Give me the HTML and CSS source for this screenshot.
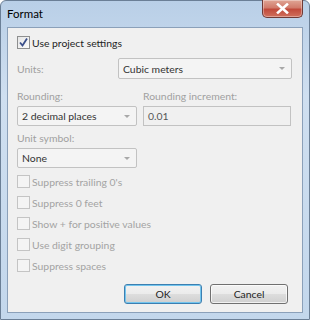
FILE: index.html
```html
<!DOCTYPE html>
<html lang="en">
<head>
    <meta charset="UTF-8">
    <title>Format</title>
    <link rel="stylesheet" href="styles.css">
</head>
<body>
    <div class="window">
        <div class="titlebar">
            <span class="title">Format</span>
            <div class="close">
                <svg width="13" height="11" viewBox="0 0 13 11">
                    <path d="M2 1.5 L11 9.5 M11 1.5 L2 9.5" stroke="#ffffff" stroke-width="2.6" stroke-linecap="square"/>
                </svg>
            </div>
        </div>
        <div class="client">
            <label class="check main-check">
                <span class="box checked">
                    <svg width="11" height="11" viewBox="0 0 11 11">
                        <path d="M2 5.5 L4.5 8.5 L9 1.5" stroke="#3a4f8a" stroke-width="1.8" fill="none"/>
                    </svg>
                </span>
                Use project settings
            </label>

            <div class="units-row">
                <span class="lbl">Units:</span>
                <div class="select wide">
                    <span>Cubic meters</span>
                    <span class="arrow"></span>
                </div>
            </div>

            <div class="two-col">
                <div class="col">
                    <span class="lbl">Rounding:</span>
                    <div class="select">
                        <span>2 decimal places</span>
                        <span class="arrow"></span>
                    </div>
                </div>
                <div class="col col-right">
                    <span class="lbl">Rounding increment:</span>
                    <div class="textbox">0.01</div>
                </div>
            </div>

            <div class="col symbol">
                <span class="lbl">Unit symbol:</span>
                <div class="select short">
                    <span>None</span>
                    <span class="arrow"></span>
                </div>
            </div>

            <div class="checks">
                <label class="check"><span class="box"></span>Suppress trailing 0's</label>
                <label class="check"><span class="box"></span>Suppress 0 feet</label>
                <label class="check"><span class="box"></span>Show + for positive values</label>
                <label class="check"><span class="box"></span>Use digit grouping</label>
                <label class="check"><span class="box"></span>Suppress spaces</label>
            </div>

            <div class="buttons">
                <button class="btn default">OK</button>
                <button class="btn">Cancel</button>
            </div>
        </div>
    </div>
</body>
</html>
```

FILE: styles.css
```css
* {
    margin: 0;
    padding: 0;
    box-sizing: border-box;
}
body {
    background-color: #ffffff;
    font-family: Lato, 'Liberation Sans', sans-serif;
    font-size: 10.4px;
    line-height: 14px;
    color: #1e1e1e;
}
/* Window frame */
.window {
    width: 310px;
    height: 320px;
    background: linear-gradient(180deg, #b9cfe7 0%, #cfdff0 30%, #c3d7ec 100%);
    border: 1px solid #6b7f96;
    border-radius: 6px 6px 0 0;
    display: flex;
    flex-direction: column;
}
.titlebar {
    height: 26px;
    position: relative;
    display: flex;
    align-items: center;
    padding-left: 6px;
}
.title {
    font-size: 11.5px;
    color: #000000;
}
.close {
    position: absolute;
    right: 6px;
    top: -1px;
    width: 41px;
    height: 18px;
    border: 1px solid #6f3a36;
    border-top: none;
    border-radius: 0 0 5px 5px;
    background: linear-gradient(180deg, #e0a595 0%, #d17b6b 45%, #c14a3b 55%, #d0705d 100%);
    display: flex;
    align-items: center;
    justify-content: center;
    box-shadow: inset 0 0 0 1px rgba(255, 255, 255, 0.35);
}
.client {
    flex: 1;
    margin: 0 6px 6px 6px;
    background-color: #f0f0f0;
    border: 1px solid #8ba0b9;
    padding: 8px 10px 0 9px;
    display: flex;
    flex-direction: column;
}
/* Labels */
.lbl {
    color: #a0a0a0;
}
/* Checkboxes */
.check {
    display: flex;
    align-items: center;
    height: 13px;
    color: #a3a3a3;
}
.main-check {
    color: #1e1e1e;
}
.box {
    width: 13px;
    height: 13px;
    border: 1px solid #c4c4c4;
    background: #f4f4f4;
    margin-right: 2px;
    display: flex;
    align-items: center;
    justify-content: center;
}
.box.checked {
    border-color: #8e8f8f;
    background: linear-gradient(135deg, #e6e6e6, #fbfbfb);
}
/* Units row */
.units-row {
    display: flex;
    align-items: center;
    justify-content: space-between;
    margin-top: 9px;
}
.select {
    height: 20px;
    border: 1px solid #c2c2c2;
    background: #f4f4f4;
    border-radius: 2px;
    display: flex;
    align-items: center;
    justify-content: space-between;
    padding: 0 6px 0 4px;
    color: #333333;
}
.select.wide {
    width: 174px;
    height: 21px;
}
.arrow {
    width: 0;
    height: 0;
    border-left: 3px solid transparent;
    border-right: 3px solid transparent;
    border-top: 3px solid #a8a8a8;
}
/* Rounding */
.two-col {
    display: flex;
    gap: 6px;
    margin-top: 10px;
}
.col {
    display: flex;
    flex-direction: column;
    gap: 3px;
}
.col .select {
    width: 120px;
}
.col-right {
    flex: 1;
}
.textbox {
    height: 20px;
    width: 148px;
    border: 1px solid #c2c2c2;
    background: #f0f0f0;
    padding: 0 4px;
    display: flex;
    align-items: center;
    color: #555555;
}
.symbol {
    margin-top: 5px;
}
/* Option checkboxes */
.checks {
    display: flex;
    flex-direction: column;
    gap: 8px;
    margin-top: 7px;
}
/* Buttons */
.buttons {
    display: flex;
    justify-content: flex-end;
    gap: 8px;
    margin-top: 12px;
    padding-right: 4px;
}
.btn {
    width: 78px;
    height: 20px;
    border: 1px solid #707070;
    border-radius: 3px;
    background: linear-gradient(180deg, #f2f2f2 0%, #ebebeb 48%, #dddddd 52%, #cfcfcf 100%);
    font-family: Lato, 'Liberation Sans', sans-serif;
    font-size: 10.4px;
    color: #1e1e1e;
    box-shadow: inset 0 0 0 1px rgba(255, 255, 255, 0.7);
}
.btn.default {
    border-color: #3c7fb1;
    box-shadow: inset 0 0 0 1px #73c5ee;
}
```
